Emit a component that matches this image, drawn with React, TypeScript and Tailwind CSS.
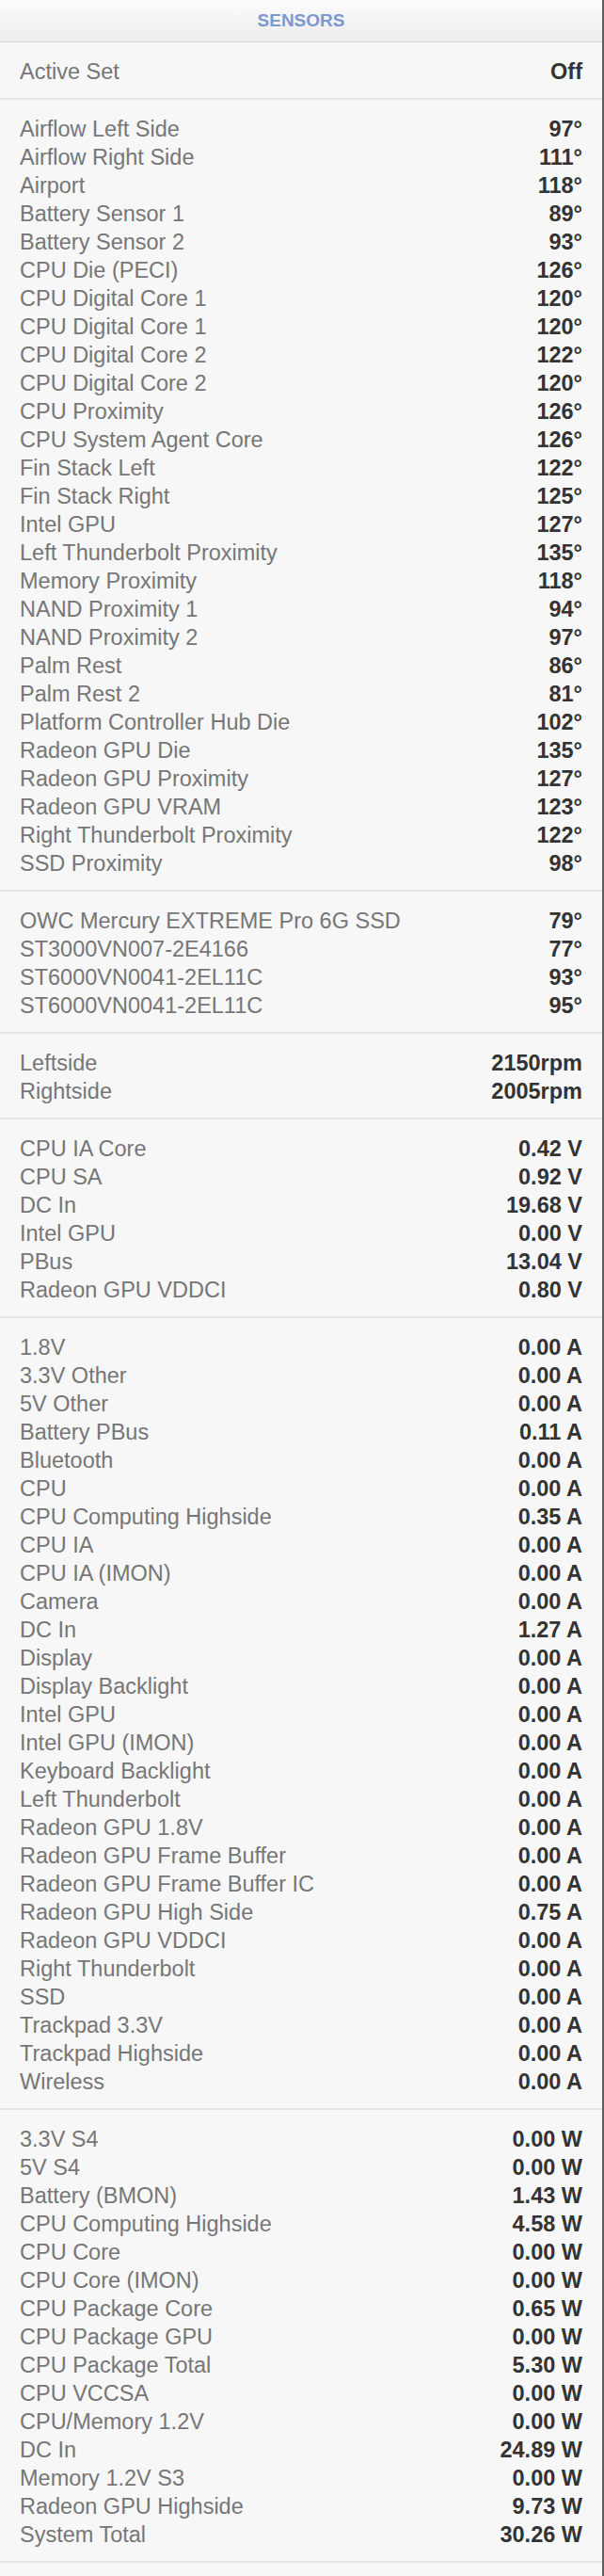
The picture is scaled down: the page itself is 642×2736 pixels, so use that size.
import React from "react";

type Row = [string, string];

const sections: Row[][] = [
  [["Active Set", "Off"]],
  [
    ["Airflow Left Side", "97°"],
    ["Airflow Right Side", "111°"],
    ["Airport", "118°"],
    ["Battery Sensor 1", "89°"],
    ["Battery Sensor 2", "93°"],
    ["CPU Die (PECI)", "126°"],
    ["CPU Digital Core 1", "120°"],
    ["CPU Digital Core 1", "120°"],
    ["CPU Digital Core 2", "122°"],
    ["CPU Digital Core 2", "120°"],
    ["CPU Proximity", "126°"],
    ["CPU System Agent Core", "126°"],
    ["Fin Stack Left", "122°"],
    ["Fin Stack Right", "125°"],
    ["Intel GPU", "127°"],
    ["Left Thunderbolt Proximity", "135°"],
    ["Memory Proximity", "118°"],
    ["NAND Proximity 1", "94°"],
    ["NAND Proximity 2", "97°"],
    ["Palm Rest", "86°"],
    ["Palm Rest 2", "81°"],
    ["Platform Controller Hub Die", "102°"],
    ["Radeon GPU Die", "135°"],
    ["Radeon GPU Proximity", "127°"],
    ["Radeon GPU VRAM", "123°"],
    ["Right Thunderbolt Proximity", "122°"],
    ["SSD Proximity", "98°"],
  ],
  [
    ["OWC Mercury EXTREME Pro 6G SSD", "79°"],
    ["ST3000VN007-2E4166", "77°"],
    ["ST6000VN0041-2EL11C", "93°"],
    ["ST6000VN0041-2EL11C", "95°"],
  ],
  [
    ["Leftside", "2150rpm"],
    ["Rightside", "2005rpm"],
  ],
  [
    ["CPU IA Core", "0.42 V"],
    ["CPU SA", "0.92 V"],
    ["DC In", "19.68 V"],
    ["Intel GPU", "0.00 V"],
    ["PBus", "13.04 V"],
    ["Radeon GPU VDDCI", "0.80 V"],
  ],
  [
    ["1.8V", "0.00 A"],
    ["3.3V Other", "0.00 A"],
    ["5V Other", "0.00 A"],
    ["Battery PBus", "0.11 A"],
    ["Bluetooth", "0.00 A"],
    ["CPU", "0.00 A"],
    ["CPU Computing Highside", "0.35 A"],
    ["CPU IA", "0.00 A"],
    ["CPU IA (IMON)", "0.00 A"],
    ["Camera", "0.00 A"],
    ["DC In", "1.27 A"],
    ["Display", "0.00 A"],
    ["Display Backlight", "0.00 A"],
    ["Intel GPU", "0.00 A"],
    ["Intel GPU (IMON)", "0.00 A"],
    ["Keyboard Backlight", "0.00 A"],
    ["Left Thunderbolt", "0.00 A"],
    ["Radeon GPU 1.8V", "0.00 A"],
    ["Radeon GPU Frame Buffer", "0.00 A"],
    ["Radeon GPU Frame Buffer IC", "0.00 A"],
    ["Radeon GPU High Side", "0.75 A"],
    ["Radeon GPU VDDCI", "0.00 A"],
    ["Right Thunderbolt", "0.00 A"],
    ["SSD", "0.00 A"],
    ["Trackpad 3.3V", "0.00 A"],
    ["Trackpad Highside", "0.00 A"],
    ["Wireless", "0.00 A"],
  ],
  [
    ["3.3V S4", "0.00 W"],
    ["5V S4", "0.00 W"],
    ["Battery (BMON)", "1.43 W"],
    ["CPU Computing Highside", "4.58 W"],
    ["CPU Core", "0.00 W"],
    ["CPU Core (IMON)", "0.00 W"],
    ["CPU Package Core", "0.65 W"],
    ["CPU Package GPU", "0.00 W"],
    ["CPU Package Total", "5.30 W"],
    ["CPU VCCSA", "0.00 W"],
    ["CPU/Memory 1.2V", "0.00 W"],
    ["DC In", "24.89 W"],
    ["Memory 1.2V S3", "0.00 W"],
    ["Radeon GPU Highside", "9.73 W"],
    ["System Total", "30.26 W"],
  ],
];

export default function App() {
  return (
    <div
      className="w-[642px] min-h-[2736px] bg-[#f7f7f7] border-r-2 border-[#5f5f5f]"
      style={{ fontFamily: '"Liberation Sans", Arial, Helvetica, sans-serif' }}
    >
      <div className="h-[45px] flex items-center justify-center bg-gradient-to-b from-[#fcfcfc] to-[#ececec] border-b border-[#d8d8d8]">
        <span className="text-[19px] font-bold text-[#7d98cf]">SENSORS</span>
      </div>
      {sections.map((rows, si) => (
        <div key={si} className="pt-4 pb-[13px] px-[21px] border-b-2 border-[#e4e4e4]">
          {rows.map(([label, value], ri) => (
            <div key={ri} className="flex justify-between items-center h-[30px] leading-[30px] text-[23.5px]">
              <span className="text-[#767676] whitespace-nowrap">{label}</span>
              <span className="font-bold text-[#333333] whitespace-nowrap">{value}</span>
            </div>
          ))}
        </div>
      ))}
    </div>
  );
}
